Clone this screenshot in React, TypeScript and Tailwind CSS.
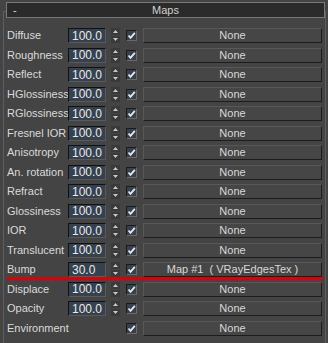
const rows: { label: string; value?: string; map: string }[] = [
  { label: 'Diffuse', value: '100.0', map: 'None' },
  { label: 'Roughness', value: '100.0', map: 'None' },
  { label: 'Reflect', value: '100.0', map: 'None' },
  { label: 'HGlossiness', value: '100.0', map: 'None' },
  { label: 'RGlossiness', value: '100.0', map: 'None' },
  { label: 'Fresnel IOR', value: '100.0', map: 'None' },
  { label: 'Anisotropy', value: '100.0', map: 'None' },
  { label: 'An. rotation', value: '100.0', map: 'None' },
  { label: 'Refract', value: '100.0', map: 'None' },
  { label: 'Glossiness', value: '100.0', map: 'None' },
  { label: 'IOR', value: '100.0', map: 'None' },
  { label: 'Translucent', value: '100.0', map: 'None' },
  { label: 'Bump', value: '30.0', map: 'Map #1  ( VRayEdgesTex )' },
  { label: 'Displace', value: '100.0', map: 'None' },
  { label: 'Opacity', value: '100.0', map: 'None' },
  { label: 'Environment', map: 'None' },
];

function Spinner() {
  return (
    <svg width="9" height="15" viewBox="0 0 9 15" className="shrink-0">
      <rect x="0" y="0" width="9" height="7" fill="#3a3a3a" />
      <rect x="0" y="8" width="9" height="7" fill="#3a3a3a" />
      <path d="M4.5 2 L7 5 L2 5 Z" fill="#c8c8c8" />
      <path d="M2 10 L7 10 L4.5 13 Z" fill="#c8c8c8" />
    </svg>
  );
}

function Check() {
  return (
    <div className="w-[11px] h-[11px] shrink-0 bg-[#36414f] border-t border-l border-[#1a1a1a] border-b border-r border-b-[#6a6a6a] border-r-[#6a6a6a] flex items-center justify-center">
      <svg width="9" height="9" viewBox="0 0 9 9">
        <path d="M1.5 4.5 L3.5 6.8 L7.8 1.8" stroke="#e8e8e8" strokeWidth="1.8" fill="none" />
      </svg>
    </div>
  );
}

export default function App() {
  return (
    <div
      className="relative w-[328px] h-[343px] bg-[#444444] overflow-hidden text-[11px] text-[#dadada] pt-[11px]"
      style={{ fontFamily: '"Liberation Sans", Arial, sans-serif' }}
    >
      {/* group box */}
      <div className="ml-[3px] mr-[2px] h-[400px] border-t border-l border-r border-[#5e5e5e]">
        {/* rollout header */}
        <div className="-mt-[10px] ml-[2px] mr-0 h-[16px] bg-[#2b2b2b] border border-[#787878] flex items-center relative">
          <span className="pl-[6px] text-[#d8d8d8]">-</span>
          <span className="absolute left-0 right-0 text-center text-[#d0d0d0]">Maps</span>
        </div>

        <div className="pt-[8px] flex flex-col">
          {rows.map((r) => (
            <div key={r.label} className="h-[19.5px] flex items-center pl-[3px]">
              <div className="w-[61px] shrink-0 whitespace-nowrap leading-none">{r.label}</div>
              {r.value ? (
                <>
                  <div className="w-[38px] h-[15px] shrink-0 bg-[#35414f] border-t border-l border-[#111] border-b border-r border-b-[#5a5a5a] border-r-[#5a5a5a] pl-[3px] flex items-center text-[#e8e8e8] text-[12px] leading-none">
                    {r.value}
                  </div>
                  <div className="ml-[5px]">
                    <Spinner />
                  </div>
                </>
              ) : (
                <div className="w-[52px] shrink-0" />
              )}
              <div className="ml-[6px]">
                <Check />
              </div>
              <div className="ml-[6px] mr-[3px] flex-1 h-[15px] bg-[#464646] border-t border-l border-[#585858] border-b border-r border-b-[#1c1c1c] border-r-[#1c1c1c] flex items-center justify-center text-[#d8d8d8] whitespace-pre leading-none">
                {r.map}
              </div>
            </div>
          ))}
        </div>
      </div>

      {/* red annotation line */}
      <div className="absolute left-[7px] top-[277px] w-[316px] h-[3px] bg-[#e00000]" />
    </div>
  );
}
